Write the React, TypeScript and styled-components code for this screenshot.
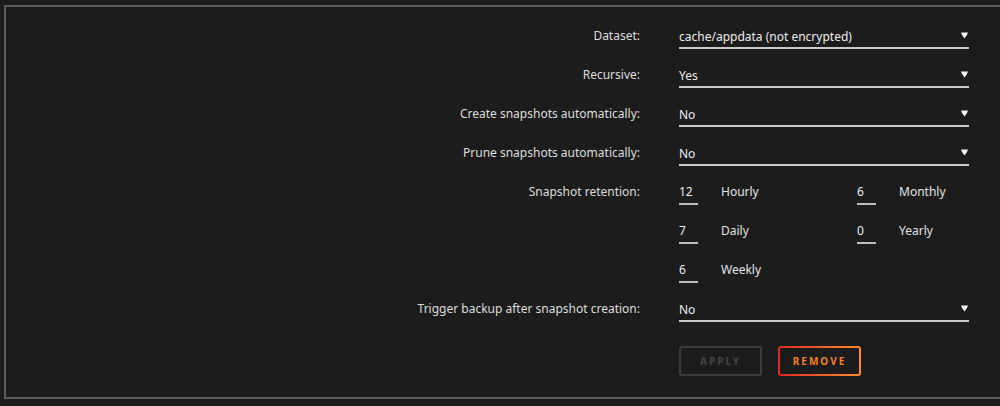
import * as React from 'react';
import styled, { createGlobalStyle } from 'styled-components';

const GlobalStyle = createGlobalStyle`
  html, body {
    margin: 0;
    padding: 0;
    background: #1c1c1c;
    overflow: hidden;
  }
  body {
    font-family: "Noto Sans", "Open Sans", sans-serif;
    font-size: 12px;
    color: #e4e4e4;
  }
`;

const Panel = styled.div`
  margin: 5px 0 0 4px;
  width: 1010px;
  height: 370px;
  border: 2px solid #5c5c5c;
  border-right: none;
  padding: 20px 0 0 0;
  box-sizing: content-box;
`;

const Row = styled.div<{ $gap?: number }>`
  display: flex;
  align-items: flex-start;
  margin-bottom: ${({ $gap }) => ($gap ?? 17)}px;
`;

const Label = styled.div`
  width: 634px;
  padding-right: 39px;
  text-align: right;
  line-height: 18px;
  color: #dcdcdc;
  flex-shrink: 0;
`;

const Field = styled.div`
  width: 290px;
`;

const Select = styled.div`
  display: flex;
  align-items: center;
  justify-content: space-between;
  height: 20px;
  line-height: 18px;
  border-bottom: 2px solid #c8c8c8;
  color: #ececec;
  box-sizing: content-box;
  padding-right: 1px;
  svg {
    margin-top: -4px;
  }
`;

const Retention = styled.div`
  display: grid;
  grid-template-columns: 178px 112px;
  row-gap: 17px;
`;

const RetItem = styled.div`
  display: flex;
  align-items: flex-start;
  height: 22px;
`;

const NumBox = styled.div`
  width: 19px;
  height: 20px;
  line-height: 18px;
  border-bottom: 2px solid #bdbdbd;
  color: #ececec;
  margin-right: 23px;
`;

const RetLabel = styled.span`
  line-height: 18px;
  color: #e4e4e4;
`;

const Buttons = styled.div`
  display: flex;
  gap: 16px;
`;

const Button = styled.button<{ $danger?: boolean }>`
  height: 30px;
  width: 83px;
  padding: 0;
  border-radius: 3px;
  font-family: "Noto Sans", "Open Sans", sans-serif;
  font-size: 10px;
  font-weight: 700;
  letter-spacing: 2px;
  text-transform: uppercase;
  cursor: pointer;
  border: 2px solid ${({ $danger }) => ($danger ? 'transparent' : '#3c3c3c')};
  color: ${({ $danger }) => ($danger ? '#f47f2a' : '#444444')};
  background: ${({ $danger }) =>
    $danger
      ? 'linear-gradient(#1c1c1c, #1c1c1c) padding-box, linear-gradient(90deg, #e22828, #ff8c2f) border-box'
      : '#1c1c1c'};
`;

const Arrow = () => (
  <svg width="7" height="7" viewBox="0 0 7 7">
    <path d="M0 0.5 L7 0.5 L6 3 L3.5 6.5 L1 3 Z" fill="#f2f2f2" />
  </svg>
);

const SelectField = ({ value }: { value: string }) => (
  <Select>
    <span>{value}</span>
    <Arrow />
  </Select>
);

const retention = [
  { n: '12', label: 'Hourly' },
  { n: '6', label: 'Monthly' },
  { n: '7', label: 'Daily' },
  { n: '0', label: 'Yearly' },
  { n: '6', label: 'Weekly' },
];

export default function App() {
  return (
    <>
      <GlobalStyle />
      <Panel>
        <Row>
          <Label>Dataset:</Label>
          <Field><SelectField value="cache/appdata (not encrypted)" /></Field>
        </Row>
        <Row>
          <Label>Recursive:</Label>
          <Field><SelectField value="Yes" /></Field>
        </Row>
        <Row>
          <Label>Create snapshots automatically:</Label>
          <Field><SelectField value="No" /></Field>
        </Row>
        <Row>
          <Label>Prune snapshots automatically:</Label>
          <Field><SelectField value="No" /></Field>
        </Row>
        <Row>
          <Label>Snapshot retention:</Label>
          <Field>
            <Retention>
              {retention.map((r, i) => (
                <RetItem key={i}>
                  <NumBox>{r.n}</NumBox>
                  <RetLabel>{r.label}</RetLabel>
                </RetItem>
              ))}
            </Retention>
          </Field>
        </Row>
        <Row $gap={24}>
          <Label>Trigger backup after snapshot creation:</Label>
          <Field><SelectField value="No" /></Field>
        </Row>
        <Row>
          <Label />
          <Buttons>
            <Button disabled>Apply</Button>
            <Button $danger>Remove</Button>
          </Buttons>
        </Row>
      </Panel>
    </>
  );
}
